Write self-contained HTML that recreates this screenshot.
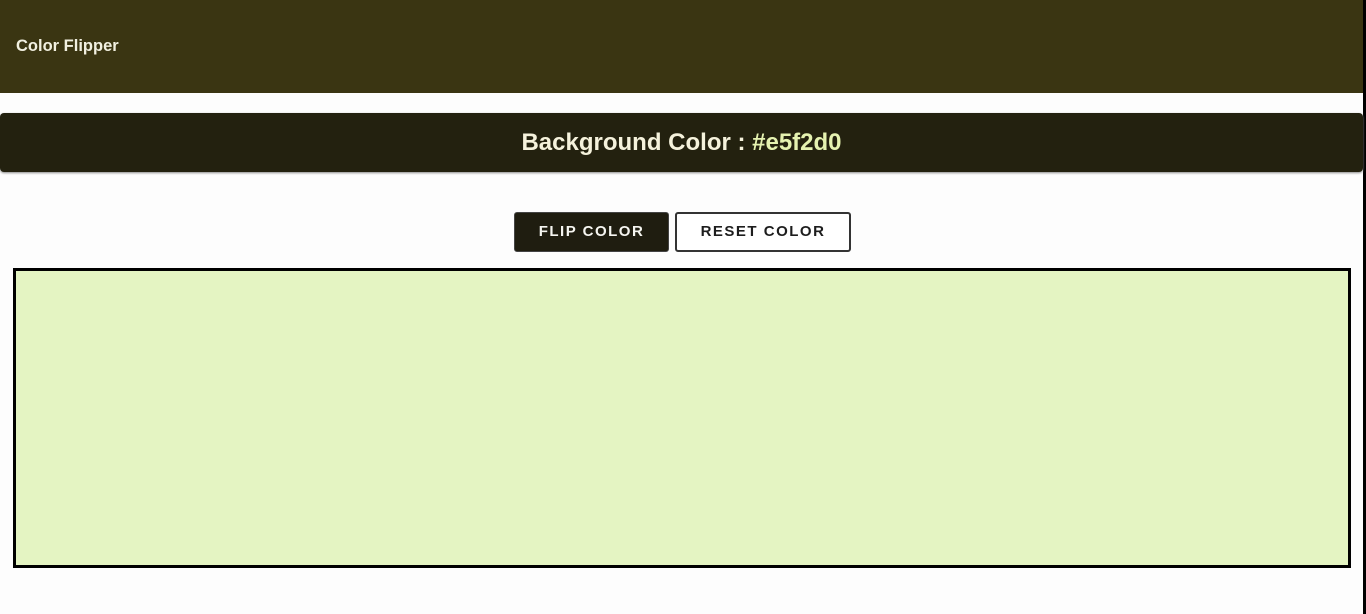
<!DOCTYPE html>
<html><head><meta charset="utf-8"><style>
html,body{margin:0;padding:0;width:1366px;height:614px;overflow:hidden;background:#fdfdfd;font-family:"Liberation Sans",Arial,sans-serif;}
.rb{position:absolute;left:1363px;top:0;width:3px;height:614px;background:#000;}
header{position:absolute;left:0;top:0;width:1363px;height:93px;background:#3a3512;}
header span{position:absolute;left:16px;top:37px;color:#f1f0e0;font-weight:bold;font-size:16.5px;}
.banner{position:absolute;left:0;top:113px;width:1363px;height:59px;background:#23210f;border-radius:4px;box-shadow:0 1px 2px #888;text-align:center;line-height:59px;color:#f5f2dc;font-weight:bold;font-size:24px;}
.banner b{color:#e5f2b0;}
.btn{position:absolute;top:212px;height:40px;box-sizing:border-box;border-radius:3px;font-weight:bold;font-size:15px;letter-spacing:1.5px;text-align:center;line-height:38px;}
.b1{left:514px;width:155px;background:#1f1d10;color:#f5f5f0;border:1px solid #444;}
.b2{left:675px;width:176px;background:#fff;color:#1d1d1d;border:2px solid #333;line-height:36px;}
.box{position:absolute;left:13px;top:268px;width:1338px;height:300px;box-sizing:border-box;border:3px solid #000;background:#e4f4c2;}
</style></head><body>
<header><span>Color Flipper</span></header>
<div class="rb"></div>
<div class="banner">Background Color : <b>#e5f2d0</b></div>
<div class="btn b1">FLIP COLOR</div>
<div class="btn b2">RESET COLOR</div>
<div class="box"></div>
</body></html>
